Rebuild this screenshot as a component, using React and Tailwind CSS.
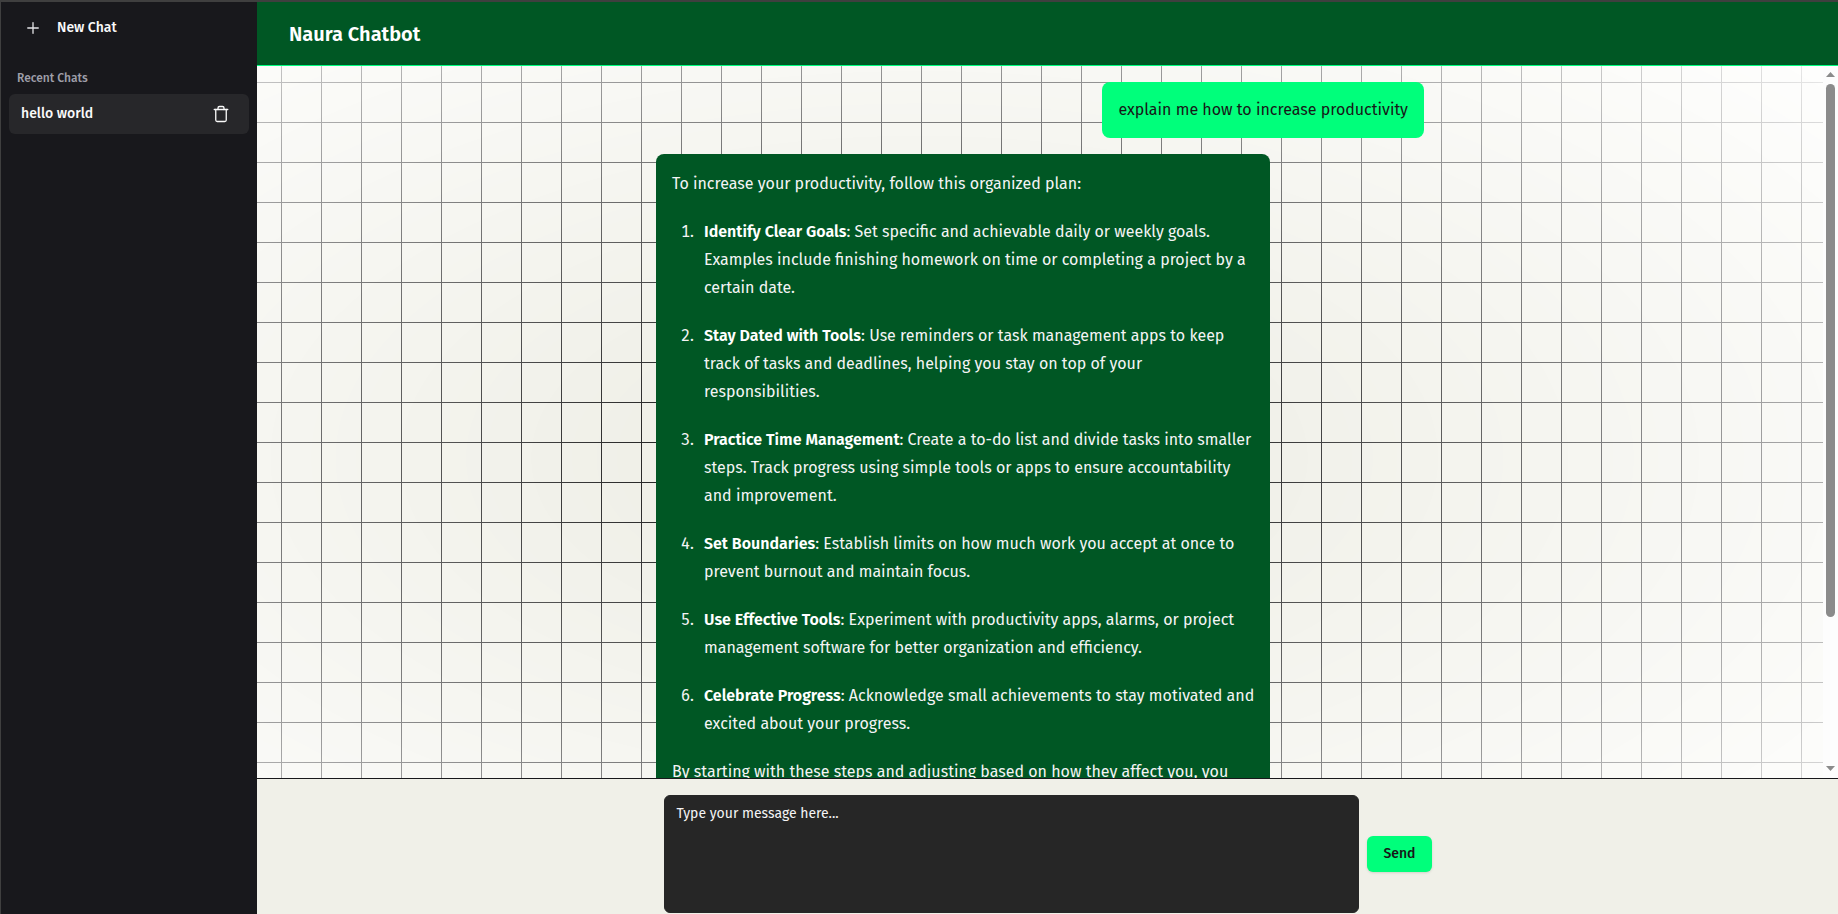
import { Plus, Trash } from "lucide-react";

const steps = [
  ["Identify Clear Goals", "Set specific and achievable daily or weekly goals. Examples include finishing homework on time or completing a project by a certain date."],
  ["Stay Dated with Tools", "Use reminders or task management apps to keep track of tasks and deadlines, helping you stay on top of your responsibilities."],
  ["Practice Time Management", "Create a to-do list and divide tasks into smaller steps. Track progress using simple tools or apps to ensure accountability and improvement."],
  ["Set Boundaries", "Establish limits on how much work you accept at once to prevent burnout and maintain focus."],
  ["Use Effective Tools", "Experiment with productivity apps, alarms, or project management software for better organization and efficiency."],
  ["Celebrate Progress", "Acknowledge small achievements to stay motivated and excited about your progress."],
];

function GridBackground() {
  return (
    <div aria-hidden="true" className="absolute inset-0 -z-10 bg-[#f0f0e8]">
      <div className="absolute inset-0 bg-[linear-gradient(to_right,#262626_1px,transparent_1px),linear-gradient(to_bottom,#262626_1px,transparent_1px)] bg-[size:40px_40px]" />
      <div className="absolute inset-0 bg-white [mask-image:radial-gradient(ellipse_at_center,transparent_20%,black)]" />
    </div>
  );
}

function Sidebar() {
  return (
    <aside className="flex w-64 shrink-0 flex-col bg-[#18181c] px-2 text-[#fafafa]">
      <button type="button" className="mt-1.5 flex h-10 items-center gap-[15px] px-[15px] text-sm font-medium">
        <Plus size={18} className="text-zinc-200" strokeWidth={1.75} />
        New Chat
      </button>
      <h2 className="mt-3.5 flex h-8 items-center px-2 text-xs font-medium text-zinc-400">Recent Chats</h2>
      <ul>
        <li className="flex h-10 items-center justify-between rounded-md bg-[#27272a] px-3">
          <a href="#chat" className="text-sm font-medium">hello world</a>
          <button type="button" aria-label="Delete chat" className="flex size-8 items-center justify-center">
            <Trash size={18} strokeWidth={1.75} />
          </button>
        </li>
      </ul>
    </aside>
  );
}

function ScrollTrack() {
  return (
    <div aria-hidden="true" className="flex w-[15px] shrink-0 flex-col items-center gap-[7px] bg-[#fdfdfd] pt-[6px] pb-[7px]">
      <svg width="9" height="5" viewBox="0 0 9 5" fill="#8b8b8b"><path d="M4.500 0L9 5H0Z" /></svg>
      <div className="min-h-0 w-full flex-1 px-[3px]">
        <div className="h-[79%] rounded-full bg-[#8b8b8b]" />
      </div>
      <svg width="9" height="5" viewBox="0 0 9 5" fill="#8b8b8b"><path d="M4.500 5L9 0H0Z" /></svg>
    </div>
  );
}

export default function App() {
  return (
    <div className="relative isolate flex h-screen border-t-2 border-l border-[#3f3f3f] font-['Fira_Sans','Noto_Sans',sans-serif]">
      <GridBackground />
      <Sidebar />
      <div className="flex min-w-0 flex-1 flex-col">
        <header className="flex h-16 shrink-0 items-center border-b border-[#00ff7f] bg-[#005724] px-8">
          <h1 className="text-xl font-semibold text-white">Naura Chatbot</h1>
        </header>
        <div className="flex min-h-0 flex-1">
          <main className="min-w-0 flex-1 overflow-y-auto p-4 [scrollbar-width:none]">
            <div className="mx-auto flex max-w-3xl flex-col gap-4">
              <div className="max-w-4/5 self-end rounded-lg bg-[#00ff7b] p-4 text-[#171717]">
                explain me how to increase productivity
              </div>
              <div className="max-w-4/5 space-y-5 self-start rounded-lg bg-[#005724] p-4 leading-7 text-zinc-100">
                <p>To increase your productivity, follow this organized plan:</p>
                <ol className="list-decimal space-y-5 pl-[26px]">
                  {steps.map(([title, body]) => (
                    <li key={title} className="pl-[6px]">
                      <strong className="font-semibold text-white">{title}</strong>: {body}
                    </li>
                  ))}
                </ol>
                <p>By starting with these steps and adjusting based on how they affect you, you can steadily increase your productivity.</p>
              </div>
            </div>
          </main>
          <ScrollTrack />
        </div>
        <footer className="shrink-0 border-t border-[#18181b] bg-[#f0f0e8] px-4 pt-4 pb-px">
          <form className="mx-auto flex max-w-3xl items-center gap-2">
            <textarea
              aria-label="Message"
              placeholder="Type your message here..."
              className="h-[118px] min-w-0 flex-1 resize-none rounded-md border border-[#262626] bg-[#262626] px-3 py-2 text-sm text-white placeholder:text-zinc-100"
            />
            <button type="button" className="h-9 rounded-md bg-[#00ff7b] px-4 text-sm font-medium text-[#171717] shadow-sm">
              Send
            </button>
          </form>
        </footer>
      </div>
    </div>
  );
}
